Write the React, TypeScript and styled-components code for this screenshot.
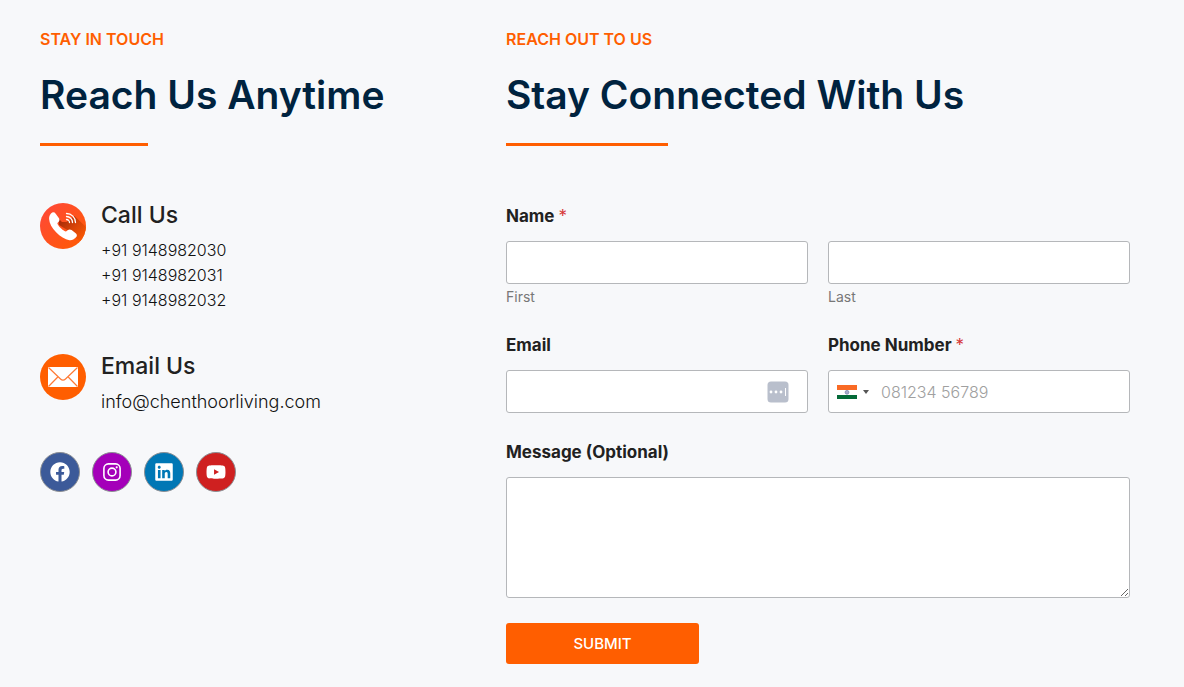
import React from 'react';
import styled, { createGlobalStyle } from 'styled-components';
import { FaFacebook, FaLinkedin, FaYoutube } from 'react-icons/fa';

const GlobalStyle = createGlobalStyle`
  *, *::before, *::after { box-sizing: border-box; }
  body {
    margin: 0;
    background: #f7f8fa;
    color: #212121;
    font-family: Inter, "Open Sans", sans-serif;
    font-size: 16px;
  }
  h2, h3, p, ul, fieldset { margin: 0; padding: 0; }
`;

const Page = styled.main`
  display: grid;
  grid-template-columns: minmax(0, 446fr) minmax(0, 624fr);
  column-gap: 20px;
  padding: 27px 54px 23px 40px;

  @media (max-width: 800px) {
    grid-template-columns: minmax(0, 1fr);
    row-gap: 48px;
    padding: 27px 24px;
  }
`;

const Eyebrow = styled.p`
  color: #ff5e00;
  font-weight: 600;
  line-height: 24px;
  text-transform: uppercase;
`;

const Heading = styled.h2`
  margin-top: 20px;
  color: #00233f;
  font-size: 39px;
  font-weight: 600;
  line-height: 48px;
`;

const Rule = styled.div<{ $width: number }>`
  width: ${(p) => p.$width}px;
  height: 3px;
  margin-top: 24px;
  background: #ff5e00;
`;

const Contact = styled.div<{ $gap: number }>`
  display: flex;
  align-items: flex-start;
  gap: 15px;
  margin-top: ${(p) => p.$gap}px;

  > svg { flex: none; }
`;

const ContactTitle = styled.h3`
  margin-bottom: 11px;
  font-size: 23px;
  font-weight: 500;
  line-height: 24px;
`;

const ContactLink = styled.a<{ $size: number }>`
  display: block;
  color: #111;
  font-size: ${(p) => p.$size}px;
  font-weight: 300;
  line-height: 25px;
  text-decoration: none;
`;

const Socials = styled.ul`
  display: flex;
  gap: 12px;
  margin-top: 38px;
  list-style: none;
`;

const SocialLink = styled.a<{ $color: string }>`
  display: flex;
  align-items: center;
  justify-content: center;
  width: 40px;
  height: 40px;
  border: 1px solid #8c8f94;
  border-radius: 50%;
  background: ${(p) => p.$color};
  color: #fff;
`;

const Form = styled.form`
  display: flex;
  flex-direction: column;
  margin-top: 58px;
`;

const FieldGroup = styled.fieldset`
  min-width: 0;
  border: 0;
`;

const Columns = styled.div<{ $top?: number }>`
  display: grid;
  grid-template-columns: repeat(2, minmax(0, 1fr));
  gap: 20px;
  margin-top: ${(p) => p.$top ?? 0}px;
`;

const labelText = `
  display: block;
  padding: 0;
  margin-bottom: 13px;
  font-size: 17px;
  font-weight: 700;
  line-height: 24px;
`;

const Legend = styled.legend`${labelText}`;
const Label = styled.label`${labelText}`;

const Required = styled.span`
  color: #d63637;
  font-weight: 400;
`;

const SubLabel = styled.label`
  display: block;
  margin-top: 3px;
  color: #777;
  font-size: 14px;
  line-height: 20px;
`;

const InputFrame = styled.div`
  display: flex;
  align-items: center;
  height: 43px;
  border: 1px solid #b5b7ba;
  border-radius: 3px;
  background: #fff;

  > svg { flex: none; margin-right: 18px; }
`;

const TextInput = styled.input`
  flex: 1;
  min-width: 0;
  height: 100%;
  padding: 0 10px;
  border: 0;
  outline: 0;
  background: transparent;
  font: inherit;

  &::placeholder { color: #a0a0a0; font-weight: 300; opacity: 1; }
`;

const CountryButton = styled.button`
  display: flex;
  align-items: center;
  gap: 6px;
  height: 100%;
  padding: 0 2px 0 8px;
  border: 0;
  background: transparent;
`;

const MessageField = styled.div`
  margin-top: 27px;
`;

const TextArea = styled.textarea`
  display: block;
  width: 100%;
  height: 121px;
  padding: 10px;
  border: 1px solid #b5b7ba;
  border-radius: 3px;
  background: #fff;
  font: inherit;
  resize: vertical;
`;

const Submit = styled.button`
  align-self: flex-start;
  width: 193px;
  height: 41px;
  margin-top: 25px;
  border: 0;
  border-radius: 3px;
  background: #ff5e00;
  color: #fff;
  font-family: inherit;
  font-size: 15px;
  font-weight: 500;
  text-transform: uppercase;
`;

const PhoneIcon = () => (
  <svg width="46" height="46" viewBox="0 0 46 46" aria-hidden="true">
    <defs>
      <linearGradient id="disc" x1="0" y1="0" x2="1" y2="1">
        <stop offset="0" stopColor="#ff473c" />
        <stop offset="1" stopColor="#ff5c00" />
      </linearGradient>
      <linearGradient id="shade" gradientUnits="userSpaceOnUse" x1="20" y1="17" x2="42" y2="38">
        <stop offset="0" stopColor="#a52a08" />
        <stop offset="0.5" stopColor="#d84408" />
        <stop offset="1" stopColor="#fb5903" />
      </linearGradient>
      <clipPath id="discClip"><circle cx="23" cy="23" r="23" /></clipPath>
    </defs>
    <circle cx="23" cy="23" r="23" fill="url(#disc)" />
    <g clipPath="url(#discClip)">
      <path d="M18.500 15.500 22 19 26.500 19 34.500 13 48 26 48 44 36 35 29 28 19 22Z" fill="url(#shade)" />
    </g>
    <path
      d="M11 10.500c1.600-1.700 3.400-1.500 4.700.2l3.100 4.200c1 1.500.8 2.900-.4 4.100l-.9.900c-.6.800 1.700 3.600 3.700 5.500s4.400 3.500 5.200 2.900l1.200-1c1.300-1.100 2.600-1.200 4-.2l3.800 2.800c1.800 1.300 2 3.100.4 4.700-1.700 1.800-3.800 2.900-6.400 2.600-4.400-.5-9.200-3.700-13.300-7.900S9.300 20.300 9.100 16c-.1-2.300.5-4 1.900-5.500Z"
      fill="#fff"
    />
    <g fill="none" stroke="#fff" strokeWidth="1.300" strokeLinecap="round">
      <path d="M26.500 10.500a9 9 0 0 1 9 9" />
      <path d="M26.500 13.500a6 6 0 0 1 6 6" />
      <path d="M26.500 16.500a3 3 0 0 1 3 3" />
    </g>
  </svg>
);

const MailIcon = () => (
  <svg width="46" height="46" viewBox="0 0 46 46" aria-hidden="true">
    <circle cx="23" cy="23" r="23" fill="#ff5e00" />
    <rect x="8" y="13" width="30" height="20" fill="#fff" />
    <g fill="none" stroke="#ff7a35" strokeWidth="1.200">
      <path d="m8.500 13.500 12 11.500q2.500 2.300 5 0l12-11.500" />
      <path d="m8.500 32.500 9.300-9.500M37.500 32.500 28.200 23" />
    </g>
  </svg>
);

const InstagramIcon = () => (
  <svg width="20" height="20" viewBox="0 0 20 20" fill="none" stroke="#fff" strokeWidth="1.600" aria-hidden="true">
    <rect x="1.900" y="1.900" width="16.200" height="16.200" rx="4.500" />
    <circle cx="10" cy="10" r="3.900" />
    <circle cx="14.700" cy="5.300" r="1.100" fill="#fff" stroke="none" />
  </svg>
);

const AutofillIcon = () => (
  <svg width="22" height="22" viewBox="0 0 22 22" aria-hidden="true">
    <rect x=".5" y=".5" width="21" height="21" rx="3.500" fill="#b9bfcc" />
    <g fill="#fff">
      <circle cx="4" cy="11" r="1.400" />
      <circle cx="9" cy="11" r="1.400" />
      <circle cx="14" cy="11" r="1.400" />
      <rect x="18" y="7" width="1" height="8" />
    </g>
  </svg>
);

const IndiaFlag = () => (
  <svg width="20" height="14" viewBox="0 0 20 14" aria-hidden="true">
    <rect width="20" height="14" fill="#fff" />
    <rect width="20" height="5" fill="#f96a25" />
    <rect y="10" width="20" height="4" fill="#046a38" />
    <circle cx="10" cy="7.300" r="1.900" fill="#a9adcb" stroke="#8288b3" strokeWidth=".8" />
  </svg>
);

const Caret = () => (
  <svg width="6" height="4" viewBox="0 0 6 4" aria-hidden="true">
    <path d="M0 0h6L3 4Z" fill="#555" />
  </svg>
);

const phones = ['+91 9148982030', '+91 9148982031', '+91 9148982032'];

const socials = [
  { name: 'Facebook', color: '#3c5a99', icon: <FaFacebook size={20} /> },
  { name: 'Instagram', color: '#a400b9', icon: <InstagramIcon /> },
  { name: 'LinkedIn', color: '#0077b5', icon: <FaLinkedin size={20} /> },
  { name: 'YouTube', color: '#cf2020', icon: <FaYoutube size={20} /> },
];

export default function App() {
  return (
    <>
      <GlobalStyle />
      <Page>
        <section>
          <Eyebrow>Stay in touch</Eyebrow>
          <Heading>Reach Us Anytime</Heading>
          <Rule $width={108} />
          <Contact $gap={57}>
            <PhoneIcon />
            <div>
              <ContactTitle>Call Us</ContactTitle>
              {phones.map((phone) => (
                <ContactLink key={phone} $size={16} href={`tel:${phone.replace(' ', '')}`}>{phone}</ContactLink>
              ))}
            </div>
          </Contact>
          <Contact $gap={41}>
            <MailIcon />
            <div>
              <ContactTitle>Email Us</ContactTitle>
              <ContactLink $size={18} href="mailto:info@chenthoorliving.com">info@chenthoorliving.com</ContactLink>
            </div>
          </Contact>
          <Socials>
            {socials.map(({ name, color, icon }) => (
              <li key={name}>
                <SocialLink href="#" aria-label={name} $color={color}>{icon}</SocialLink>
              </li>
            ))}
          </Socials>
        </section>

        <section>
          <Eyebrow>Reach out to us</Eyebrow>
          <Heading>Stay Connected With Us</Heading>
          <Rule $width={162} />
          <Form onSubmit={(e) => e.preventDefault()}>
            <FieldGroup>
              <Legend>Name <Required>*</Required></Legend>
              <Columns>
                <div>
                  <InputFrame><TextInput id="first" type="text" required /></InputFrame>
                  <SubLabel htmlFor="first">First</SubLabel>
                </div>
                <div>
                  <InputFrame><TextInput id="last" type="text" required /></InputFrame>
                  <SubLabel htmlFor="last">Last</SubLabel>
                </div>
              </Columns>
            </FieldGroup>
            <Columns $top={26}>
              <div>
                <Label htmlFor="email">Email</Label>
                <InputFrame>
                  <TextInput id="email" type="email" />
                  <AutofillIcon />
                </InputFrame>
              </div>
              <div>
                <Label htmlFor="phone">Phone Number <Required>*</Required></Label>
                <InputFrame>
                  <CountryButton type="button" aria-label="Country: India">
                    <IndiaFlag />
                    <Caret />
                  </CountryButton>
                  <TextInput id="phone" type="tel" placeholder="081234 56789" required />
                </InputFrame>
              </div>
            </Columns>
            <MessageField>
              <Label htmlFor="message">Message (Optional)</Label>
              <TextArea id="message" />
            </MessageField>
            <Submit type="submit">Submit</Submit>
          </Form>
        </section>
      </Page>
    </>
  );
}
